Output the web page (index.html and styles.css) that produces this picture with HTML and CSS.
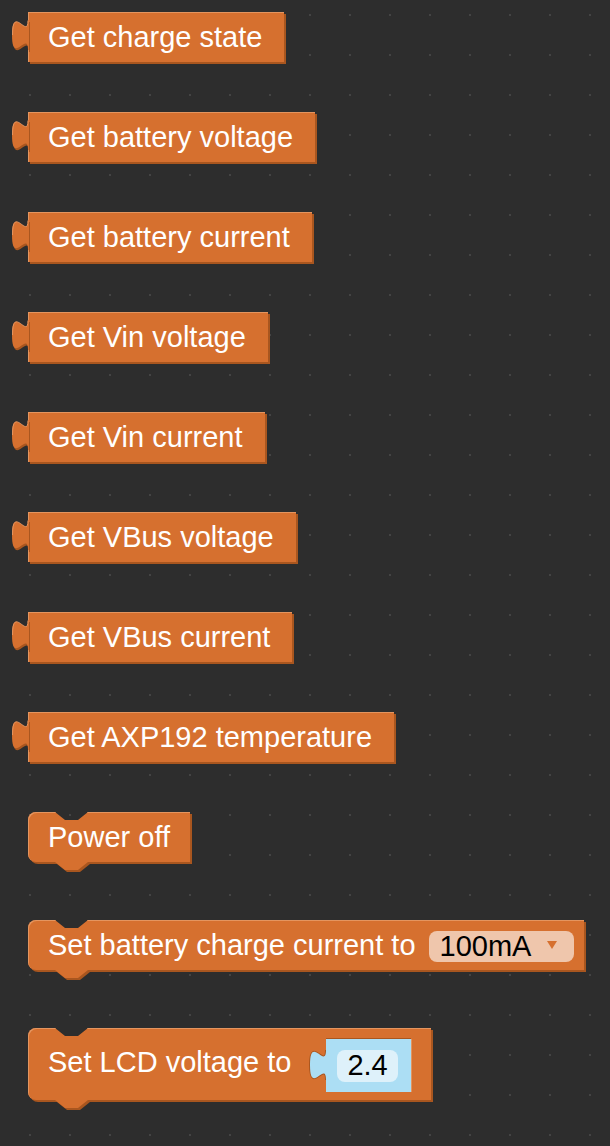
FILE: index.html
```html
<!DOCTYPE html>
<html>
<head>
<meta charset="utf-8">
<link rel="stylesheet" href="styles.css">
</head>
<body>
<div class="workspace">
  <div class="block out">
    <svg class="tab" viewBox="0 0 18 32"><path class="tab-shadow" d="M17,0 L16,0 C16,20 0,-16 0,15 S16,10 16,30 L17,30 Z" transform="translate(1,2)"/><path class="tab-fill" d="M17,0 L16,0 C16,20 0,-16 0,15 S16,10 16,30 L17,30 Z"/><path class="tab-hl" d="M16,0.5 C16,20 0.5,-16 0.5,15"/></svg>
    <span class="label">Get charge state</span>
  </div>
  <div class="block out">
    <svg class="tab" viewBox="0 0 18 32"><path class="tab-shadow" d="M17,0 L16,0 C16,20 0,-16 0,15 S16,10 16,30 L17,30 Z" transform="translate(1,2)"/><path class="tab-fill" d="M17,0 L16,0 C16,20 0,-16 0,15 S16,10 16,30 L17,30 Z"/><path class="tab-hl" d="M16,0.5 C16,20 0.5,-16 0.5,15"/></svg>
    <span class="label">Get battery voltage</span>
  </div>
  <div class="block out">
    <svg class="tab" viewBox="0 0 18 32"><path class="tab-shadow" d="M17,0 L16,0 C16,20 0,-16 0,15 S16,10 16,30 L17,30 Z" transform="translate(1,2)"/><path class="tab-fill" d="M17,0 L16,0 C16,20 0,-16 0,15 S16,10 16,30 L17,30 Z"/><path class="tab-hl" d="M16,0.5 C16,20 0.5,-16 0.5,15"/></svg>
    <span class="label">Get battery current</span>
  </div>
  <div class="block out">
    <svg class="tab" viewBox="0 0 18 32"><path class="tab-shadow" d="M17,0 L16,0 C16,20 0,-16 0,15 S16,10 16,30 L17,30 Z" transform="translate(1,2)"/><path class="tab-fill" d="M17,0 L16,0 C16,20 0,-16 0,15 S16,10 16,30 L17,30 Z"/><path class="tab-hl" d="M16,0.5 C16,20 0.5,-16 0.5,15"/></svg>
    <span class="label">Get Vin voltage</span>
  </div>
  <div class="block out">
    <svg class="tab" viewBox="0 0 18 32"><path class="tab-shadow" d="M17,0 L16,0 C16,20 0,-16 0,15 S16,10 16,30 L17,30 Z" transform="translate(1,2)"/><path class="tab-fill" d="M17,0 L16,0 C16,20 0,-16 0,15 S16,10 16,30 L17,30 Z"/><path class="tab-hl" d="M16,0.5 C16,20 0.5,-16 0.5,15"/></svg>
    <span class="label">Get Vin current</span>
  </div>
  <div class="block out">
    <svg class="tab" viewBox="0 0 18 32"><path class="tab-shadow" d="M17,0 L16,0 C16,20 0,-16 0,15 S16,10 16,30 L17,30 Z" transform="translate(1,2)"/><path class="tab-fill" d="M17,0 L16,0 C16,20 0,-16 0,15 S16,10 16,30 L17,30 Z"/><path class="tab-hl" d="M16,0.5 C16,20 0.5,-16 0.5,15"/></svg>
    <span class="label">Get VBus voltage</span>
  </div>
  <div class="block out">
    <svg class="tab" viewBox="0 0 18 32"><path class="tab-shadow" d="M17,0 L16,0 C16,20 0,-16 0,15 S16,10 16,30 L17,30 Z" transform="translate(1,2)"/><path class="tab-fill" d="M17,0 L16,0 C16,20 0,-16 0,15 S16,10 16,30 L17,30 Z"/><path class="tab-hl" d="M16,0.5 C16,20 0.5,-16 0.5,15"/></svg>
    <span class="label">Get VBus current</span>
  </div>
  <div class="block out">
    <svg class="tab" viewBox="0 0 18 32"><path class="tab-shadow" d="M17,0 L16,0 C16,20 0,-16 0,15 S16,10 16,30 L17,30 Z" transform="translate(1,2)"/><path class="tab-fill" d="M17,0 L16,0 C16,20 0,-16 0,15 S16,10 16,30 L17,30 Z"/><path class="tab-hl" d="M16,0.5 C16,20 0.5,-16 0.5,15"/></svg>
    <span class="label">Get AXP192 temperature</span>
  </div>

  <div class="block stmt">
    <span class="label">Power off</span>
    <svg class="next" viewBox="0 0 36 11"><path class="tab-shadow" d="M0,0 L10,8 L23,8 L33,0 Z" transform="translate(2,2)"/><path class="tab-fill" d="M0,-1 L0,0 L10,8 L23,8 L33,0 L33,-1 Z"/></svg>
  </div>

  <div class="block stmt later charge">
    <span class="label">Set battery charge current to</span>
    <span class="dropdown"><span class="dd-text">100mA</span><span class="arrow"></span></span>
    <svg class="next" viewBox="0 0 36 11"><path class="tab-shadow" d="M0,0 L10,8 L23,8 L33,0 Z" transform="translate(2,2)"/><path class="tab-fill" d="M0,-1 L0,0 L10,8 L23,8 L33,0 L33,-1 Z"/></svg>
  </div>

  <div class="block stmt later lcd">
    <span class="label">Set LCD voltage to</span>
    <span class="value">
      <svg class="tab vtab" viewBox="0 0 18 32"><path class="vtab-outline" d="M16,0 C16,20 0,-16 0,15 S16,10 16,30"/><path class="vtab-fill" d="M17,0 L16,0 C16,20 0,-16 0,15 S16,10 16,30 L17,30 Z"/></svg>
      <span class="num">2.4</span>
    </span>
    <svg class="next" viewBox="0 0 36 11"><path class="tab-shadow" d="M0,0 L10,8 L23,8 L33,0 Z" transform="translate(2,2)"/><path class="tab-fill" d="M0,-1 L0,0 L10,8 L23,8 L33,0 L33,-1 Z"/></svg>
  </div>
</div>
</body>
</html>
```

FILE: styles.css
```css
html, body {
  margin: 0;
  padding: 0;
}

body {
  width: 610px;
  height: 1146px;
  overflow: hidden;
  background-color: #2d2d2d;
  background-image: radial-gradient(circle at 1px 1px, #444444 0.9px, rgba(45, 45, 45, 0) 1.3px);
  background-size: 40px 40px;
  background-position: 29px 14px;
  font-family: "Liberation Sans", Arial, sans-serif;
}

.workspace {
  display: flex;
  flex-direction: column;
  align-items: flex-start;
  gap: 50px;
  padding: 12px 0 0 28px;
}

.block {
  position: relative;
  display: flex;
  align-items: center;
  box-sizing: border-box;
  height: 50px;
  padding: 0 20px;
  background: #d6702f;
  color: #ffffff;
  font-size: 29px;
  white-space: nowrap;
  box-shadow: inset 1px 1px 0 #e4955f, 2px 2px 0 #a9561f;
}

.block.out {
  padding-right: 22px;
}

.label {
  display: block;
}

.tab {
  position: absolute;
  left: -16px;
  top: 8px;
  width: 18px;
  height: 32px;
  overflow: visible;
}

.tab-fill {
  fill: #d6702f;
}

.tab-shadow {
  fill: #a9561f;
}

.tab-hl {
  fill: none;
  stroke: #e4955f;
  stroke-width: 1;
}

.stmt {
  border-radius: 8px 0 0 8px;
  clip-path: polygon(0 0, 27px 0, 37px 8px, 50px 8px, 60px 0, calc(100% + 6px) 0, calc(100% + 6px) calc(100% + 16px), 0 calc(100% + 16px));
}

.stmt.later {
  margin-top: 8px;
}

.next {
  position: absolute;
  left: 27px;
  top: 100%;
  width: 36px;
  height: 11px;
  overflow: visible;
}

.charge {
  padding-right: 10px;
}

.dropdown {
  display: flex;
  align-items: center;
  box-sizing: border-box;
  height: 31px;
  margin-left: 13px;
  margin-top: 2px;
  padding: 0 17px 0 11px;
  gap: 16px;
  background: #efc6ac;
  border-radius: 8px;
  color: #000000;
}

.arrow {
  width: 0;
  height: 0;
  border-left: 5px solid transparent;
  border-right: 5px solid transparent;
  border-top: 8px solid #d6702f;
  margin-top: -2px;
}

.lcd {
  height: 72px;
  align-items: flex-start;
}

.lcd .label {
  margin-top: 18px;
}

.value {
  position: relative;
  display: flex;
  align-items: center;
  box-sizing: border-box;
  height: 53px;
  margin-top: 11px;
  margin-left: 35px;
  padding: 0 13px 0 11px;
  background: #acdef4;
  box-shadow: 0 -1px 0 #a9561f, 1px 0 0 #e4955f;
}

.vtab {
  top: 11px;
}

.vtab-fill {
  fill: #acdef4;
}

.vtab-outline {
  fill: none;
  stroke: #a9561f;
  stroke-width: 2;
}

.num {
  display: flex;
  align-items: center;
  box-sizing: border-box;
  height: 32px;
  padding: 0 10px;
  background: #def1fa;
  border-radius: 8px;
  color: #000000;
}
```
